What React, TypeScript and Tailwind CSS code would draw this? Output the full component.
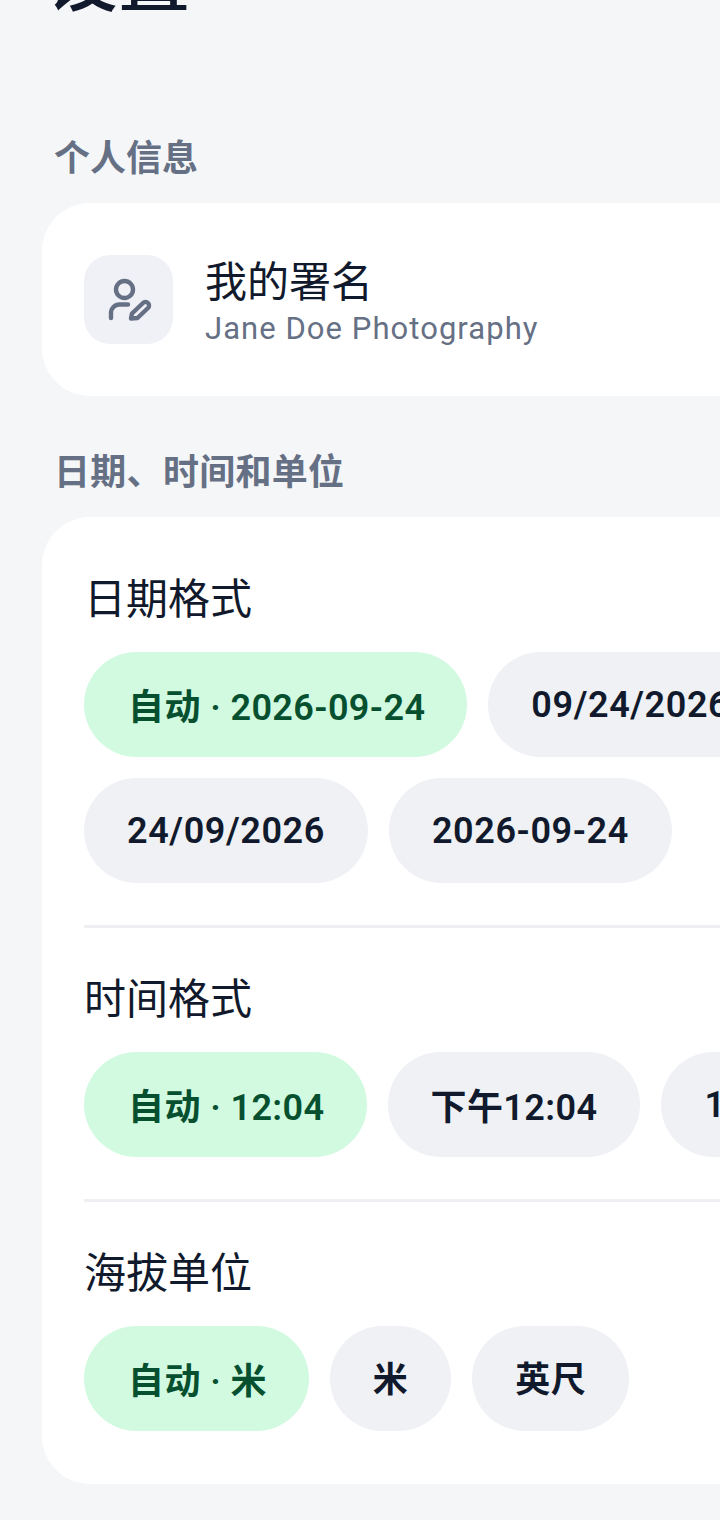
const pageFont = "font-['Roboto','Noto_Sans_CJK_SC',sans-serif]";

type ChipKind = "active" | "plain" | "mixed" | "word";

const chipClass: Record<ChipKind, string> = {
  active: "flex h-[105px] items-center rounded-full bg-[#d1fae0] pt-[6px] pr-[42px] pl-[44px] text-[36px] font-semibold tracking-[0.4px] text-[#065030]",
  plain: "flex h-[105px] items-center rounded-full bg-[#eff1f5] px-[43px] text-[36px] font-semibold tracking-[0.6px] text-[#111a2c]",
  mixed: "flex h-[105px] items-center rounded-full bg-[#eff1f5] px-[43px] pt-[6px] text-[36px] font-semibold tracking-[0.4px] text-[#111a2c]",
  word: "flex h-[105px] items-center rounded-full bg-[#eff1f5] px-[43px] pt-[6px] text-[35px] font-semibold tracking-[0.4px] text-[#111a2c]",
};

function Chip({ label, kind = "plain" }: { label: string; kind?: ChipKind }) {
  return <div className={chipClass[kind]}>{label}</div>;
}

function Group({ title, children }: { title: string; children: React.ReactNode }) {
  return (
    <div>
      <div className="mb-[24px] text-[42px] leading-[56px] text-[#111a2c]">{title}</div>
      <div className="flex flex-wrap gap-[21px]">{children}</div>
    </div>
  );
}

export default function App() {
  return (
    <div className="h-[1520px] w-[720px] overflow-hidden bg-[#f5f6f8]">
      <div className={`w-[1080px] px-[42px] ${pageFont}`}>
        {/* heading is scrolled partly out of view */}
        <h1 className="-mt-[63px] ml-[4px] text-[72px] leading-[88px] font-medium text-[#111a2c]">设置</h1>

        <div className="mt-[110px] ml-[12px] text-[36px] leading-[48px] font-semibold text-[#667085]">个人信息</div>
        <div className="mt-[20px] flex h-[193px] items-center gap-[32px] rounded-[48px] bg-white px-[42px]">
          <div className="flex h-[89px] w-[89px] items-center justify-center rounded-[26px] bg-[#f0f1f6]">
            <svg width="89" height="89" viewBox="0 0 89 89" fill="none" stroke="#667085" strokeWidth="4.4" strokeLinecap="round" strokeLinejoin="round">
              <circle cx="40.5" cy="34.5" r="8.5" />
              <path d="M27 63v-5a8.500 8.500 0 0 1 8.500-8.500h8.500" />
              <path d="M47 63.500l1-5L59 48a3.500 3.500 0 0 1 5 5L53.500 63z" />
            </svg>
          </div>
          <div className="pt-[4px]">
            <div className="text-[42px] leading-[55px] text-[#111a2c]">我的署名</div>
            <div className="text-[31px] leading-[38px] tracking-[1.05px] text-[#667085]">Jane Doe Photography</div>
          </div>
        </div>

        <div className="mt-[53px] ml-[12px] text-[36px] leading-[48px] font-semibold tracking-[0.3px] text-[#667085]">日期、时间和单位</div>
        <div className="mt-[20px] rounded-[48px] bg-white px-[42px] pt-[55px] pb-[53px]">
          <Group title="日期格式">
            <Chip label="自动 · 2026-09-24" kind="active" />
            <Chip label="09/24/2026" />
            <Chip label="24/09/2026" />
            <Chip label="2026-09-24" />
          </Group>
          <div className="mt-[42px] mb-[44px] h-[3px] bg-[#eeeff2]" />
          <Group title="时间格式">
            <Chip label="自动 · 12:04" kind="active" />
            <Chip label="下午12:04" kind="mixed" />
            <Chip label="12:04" />
          </Group>
          <div className="mt-[42px] mb-[44px] h-[3px] bg-[#eeeff2]" />
          <Group title="海拔单位">
            <Chip label="自动 · 米" kind="active" />
            <Chip label="米" kind="word" />
            <Chip label="英尺" kind="word" />
          </Group>
        </div>
      </div>
    </div>
  );
}
